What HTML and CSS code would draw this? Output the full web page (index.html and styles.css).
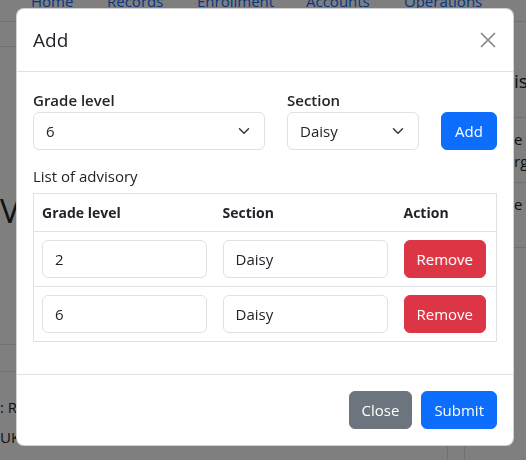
FILE: index.html
```html
<!DOCTYPE html>
<html lang="en">
<head>
<meta charset="utf-8">
<title>Add advisory</title>
<link rel="stylesheet" href="styles.css">
</head>
<body>
<div class="page">
  <nav class="topnav">
    <a class="nav-link w-home">Home</a>
    <a class="nav-link w-records">Records</a>
    <a class="nav-link w-enroll">Enrollment</a>
    <a class="nav-link w-accounts">Accounts</a>
    <a class="nav-link">Operations</a>
  </nav>
  <div class="section-a">
    <div class="a-main">
      <div class="toolbar"></div>
      <h1 class="hero">V</h1>
    </div>
    <aside class="aside">
      <h2 class="aside-title">is</h2>
      <ul class="aside-list">
        <li class="aside-item">e l<br>rg</li>
        <li class="aside-item">e l</li>
      </ul>
    </aside>
  </div>
  <div class="section-b">
    <div class="b-left">
      <div class="b-rule"></div>
      <p class="b-text first">: R</p>
      <p class="b-text">UK</p>
    </div>
    <div class="b-mid"></div>
  </div>
</div>

<div class="backdrop"></div>

<div class="modal" role="dialog" aria-labelledby="modal-title">
  <div class="modal-header">
    <h5 class="modal-title" id="modal-title">Add</h5>
    <button class="btn-close" type="button" aria-label="Close">
      <svg width="16" height="16" viewBox="0 0 16 16"><path d="M1 1L15 15M15 1L1 15" stroke="#000" stroke-opacity="0.5" stroke-width="1.5" fill="none"/></svg>
    </button>
  </div>
  <div class="modal-body">
    <div class="form-row">
      <div class="field field-grade">
        <label class="form-label">Grade level</label>
        <div class="form-select"><span>6</span>
          <svg class="chev" width="16" height="12" viewBox="0 0 16 16"><path d="M2 5l6 6 6-6" stroke="#343a40" stroke-width="2" stroke-linecap="round" stroke-linejoin="round" fill="none"/></svg>
        </div>
      </div>
      <div class="field field-section">
        <label class="form-label">Section</label>
        <div class="form-select"><span>Daisy</span>
          <svg class="chev" width="16" height="12" viewBox="0 0 16 16"><path d="M2 5l6 6 6-6" stroke="#343a40" stroke-width="2" stroke-linecap="round" stroke-linejoin="round" fill="none"/></svg>
        </div>
      </div>
      <button class="btn btn-primary btn-add" type="button">Add</button>
    </div>
    <p class="list-label">List of advisory</p>
    <table class="table">
      <colgroup><col class="c1"><col class="c2"><col></colgroup>
      <thead>
        <tr><th>Grade level</th><th>Section</th><th>Action</th></tr>
      </thead>
      <tbody>
        <tr>
          <td><input class="form-control" value="2"></td>
          <td><input class="form-control" value="Daisy"></td>
          <td><button class="btn btn-danger" type="button">Remove</button></td>
        </tr>
        <tr>
          <td><input class="form-control" value="6"></td>
          <td><input class="form-control" value="Daisy"></td>
          <td><button class="btn btn-danger" type="button">Remove</button></td>
        </tr>
      </tbody>
    </table>
  </div>
  <div class="modal-footer">
    <button class="btn btn-secondary" type="button">Close</button>
    <button class="btn btn-primary" type="button">Submit</button>
  </div>
</div>
</body>
</html>
```
FILE: styles.css
```css
* { box-sizing: border-box; }

html, body {
  margin: 0;
  width: 526px;
  height: 460px;
  overflow: hidden;
}

body {
  font-family: "Open Sans", "Noto Sans", sans-serif;
  font-size: 15px;
  line-height: 24px;
  color: #212529;
  background: #fff;
}

/* ---------- page behind the modal ---------- */
.page {
  width: 526px;
  height: 460px;
  overflow: hidden;
}

.topnav {
  display: flex;
  margin-top: -11px;
  height: 33px;
  padding-left: 31px;
  border-bottom: 1px solid #dee2e6;
}

.nav-link {
  color: #0d6efd;
  line-height: 24px;
  white-space: nowrap;
}
.w-home { width: 76px; }
.w-records { width: 90px; }
.w-enroll { width: 109px; }
.w-accounts { width: 98px; }

.section-a {
  display: flex;
  align-items: flex-start;
  height: 322px;
}

.a-main {
  width: 464px;
  flex: none;
}

.toolbar {
  height: 25px;
  border-bottom: 1px solid #dee2e6;
}

.hero {
  margin: 143px 0 0;
  font-size: 33px;
  font-weight: 400;
  line-height: 42px;
}

.aside {
  flex: 1;
  padding-left: 50px;
  white-space: nowrap;
  overflow: hidden;
}

.aside-title {
  margin: 44px 0 0;
  font-size: 19px;
  font-weight: 400;
  line-height: 30px;
}

.aside-list {
  list-style: none;
  margin: 21px 0 0 -50px;
  padding: 0;
}

.aside-item {
  border-top: 1px solid #dee2e6;
  padding: 10px 0 0 50px;
  height: 65px;
  line-height: 22px;
}
.aside-item:last-child {
  border-bottom: 1px solid #dee2e6;
  height: 66px;
}

.section-b {
  display: flex;
  height: 116px;
}

.b-left {
  width: 448px;
  flex: none;
  border-top: 1px solid #dee2e6;
  border-right: 1px solid #dee2e6;
}

.b-rule {
  height: 27px;
  border-bottom: 1px solid #dee2e6;
}

.b-text {
  margin: 0;
  padding-top: 6px;
  line-height: 24px;
}
.b-text.first { padding-top: 23px; }

.b-mid {
  width: 17px;
  border-right: 1px solid #dee2e6;
}

.backdrop {
  position: fixed;
  inset: 0;
  background: rgba(0, 0, 0, 0.5);
}

/* ---------- modal ---------- */
.modal {
  position: absolute;
  left: 16px;
  top: 8px;
  width: 498px;
  background: #fff;
  border: 1px solid rgba(0, 0, 0, 0.175);
  border-radius: 8px;
}

.modal-header {
  display: flex;
  align-items: center;
  justify-content: space-between;
  padding: 16px;
  border-bottom: 1px solid #dee2e6;
}

.modal-title {
  margin: 0;
  font-size: 19px;
  font-weight: 500;
  line-height: 30px;
}

.btn-close {
  display: flex;
  padding: 0;
  margin-right: 1px;
  border: 0;
  background: transparent;
}

.modal-body {
  padding: 16px;
}

.form-row {
  display: flex;
  align-items: flex-end;
  gap: 22px;
}

.field-grade { width: 232px; }
.field-section { width: 132px; }
.btn-add { width: 56px; }

.form-label {
  display: block;
  font-weight: 600;
  line-height: 24px;
}

.form-select {
  display: flex;
  align-items: center;
  justify-content: space-between;
  height: 38px;
  padding: 0 12px;
  border: 1px solid #dee2e6;
  border-radius: 6px;
}

.list-label {
  margin: 14px 0 5px;
  line-height: 24px;
}

.table {
  width: 100%;
  table-layout: fixed;
  border-collapse: collapse;
  border: 1px solid #dee2e6;
  margin-bottom: 16px;
}
.c1, .c2 { width: 181px; }

.table th,
.table td {
  padding: 8px;
  text-align: left;
  border-bottom: 1px solid #dee2e6;
}

.table th {
  font-size: 14px;
  font-weight: 700;
  line-height: 21px;
}

.form-control {
  display: block;
  width: 100%;
  height: 38px;
  padding: 6px 12px;
  font: inherit;
  color: #212529;
  border: 1px solid #dee2e6;
  border-radius: 6px;
  background: #fff;
}

.btn {
  display: inline-block;
  padding: 6px 12px;
  font: inherit;
  line-height: 24px;
  color: #fff;
  text-align: center;
  border: 1px solid transparent;
  border-radius: 6px;
  white-space: nowrap;
}
.btn-primary { background: #0d6efd; border-color: #0d6efd; }
.btn-danger { background: #dc3545; border-color: #dc3545; }
.btn-secondary { background: #6c757d; border-color: #6c757d; }

.modal-footer {
  display: flex;
  justify-content: flex-end;
  gap: 9px;
  padding: 16px;
  border-top: 1px solid #dee2e6;
}
```
